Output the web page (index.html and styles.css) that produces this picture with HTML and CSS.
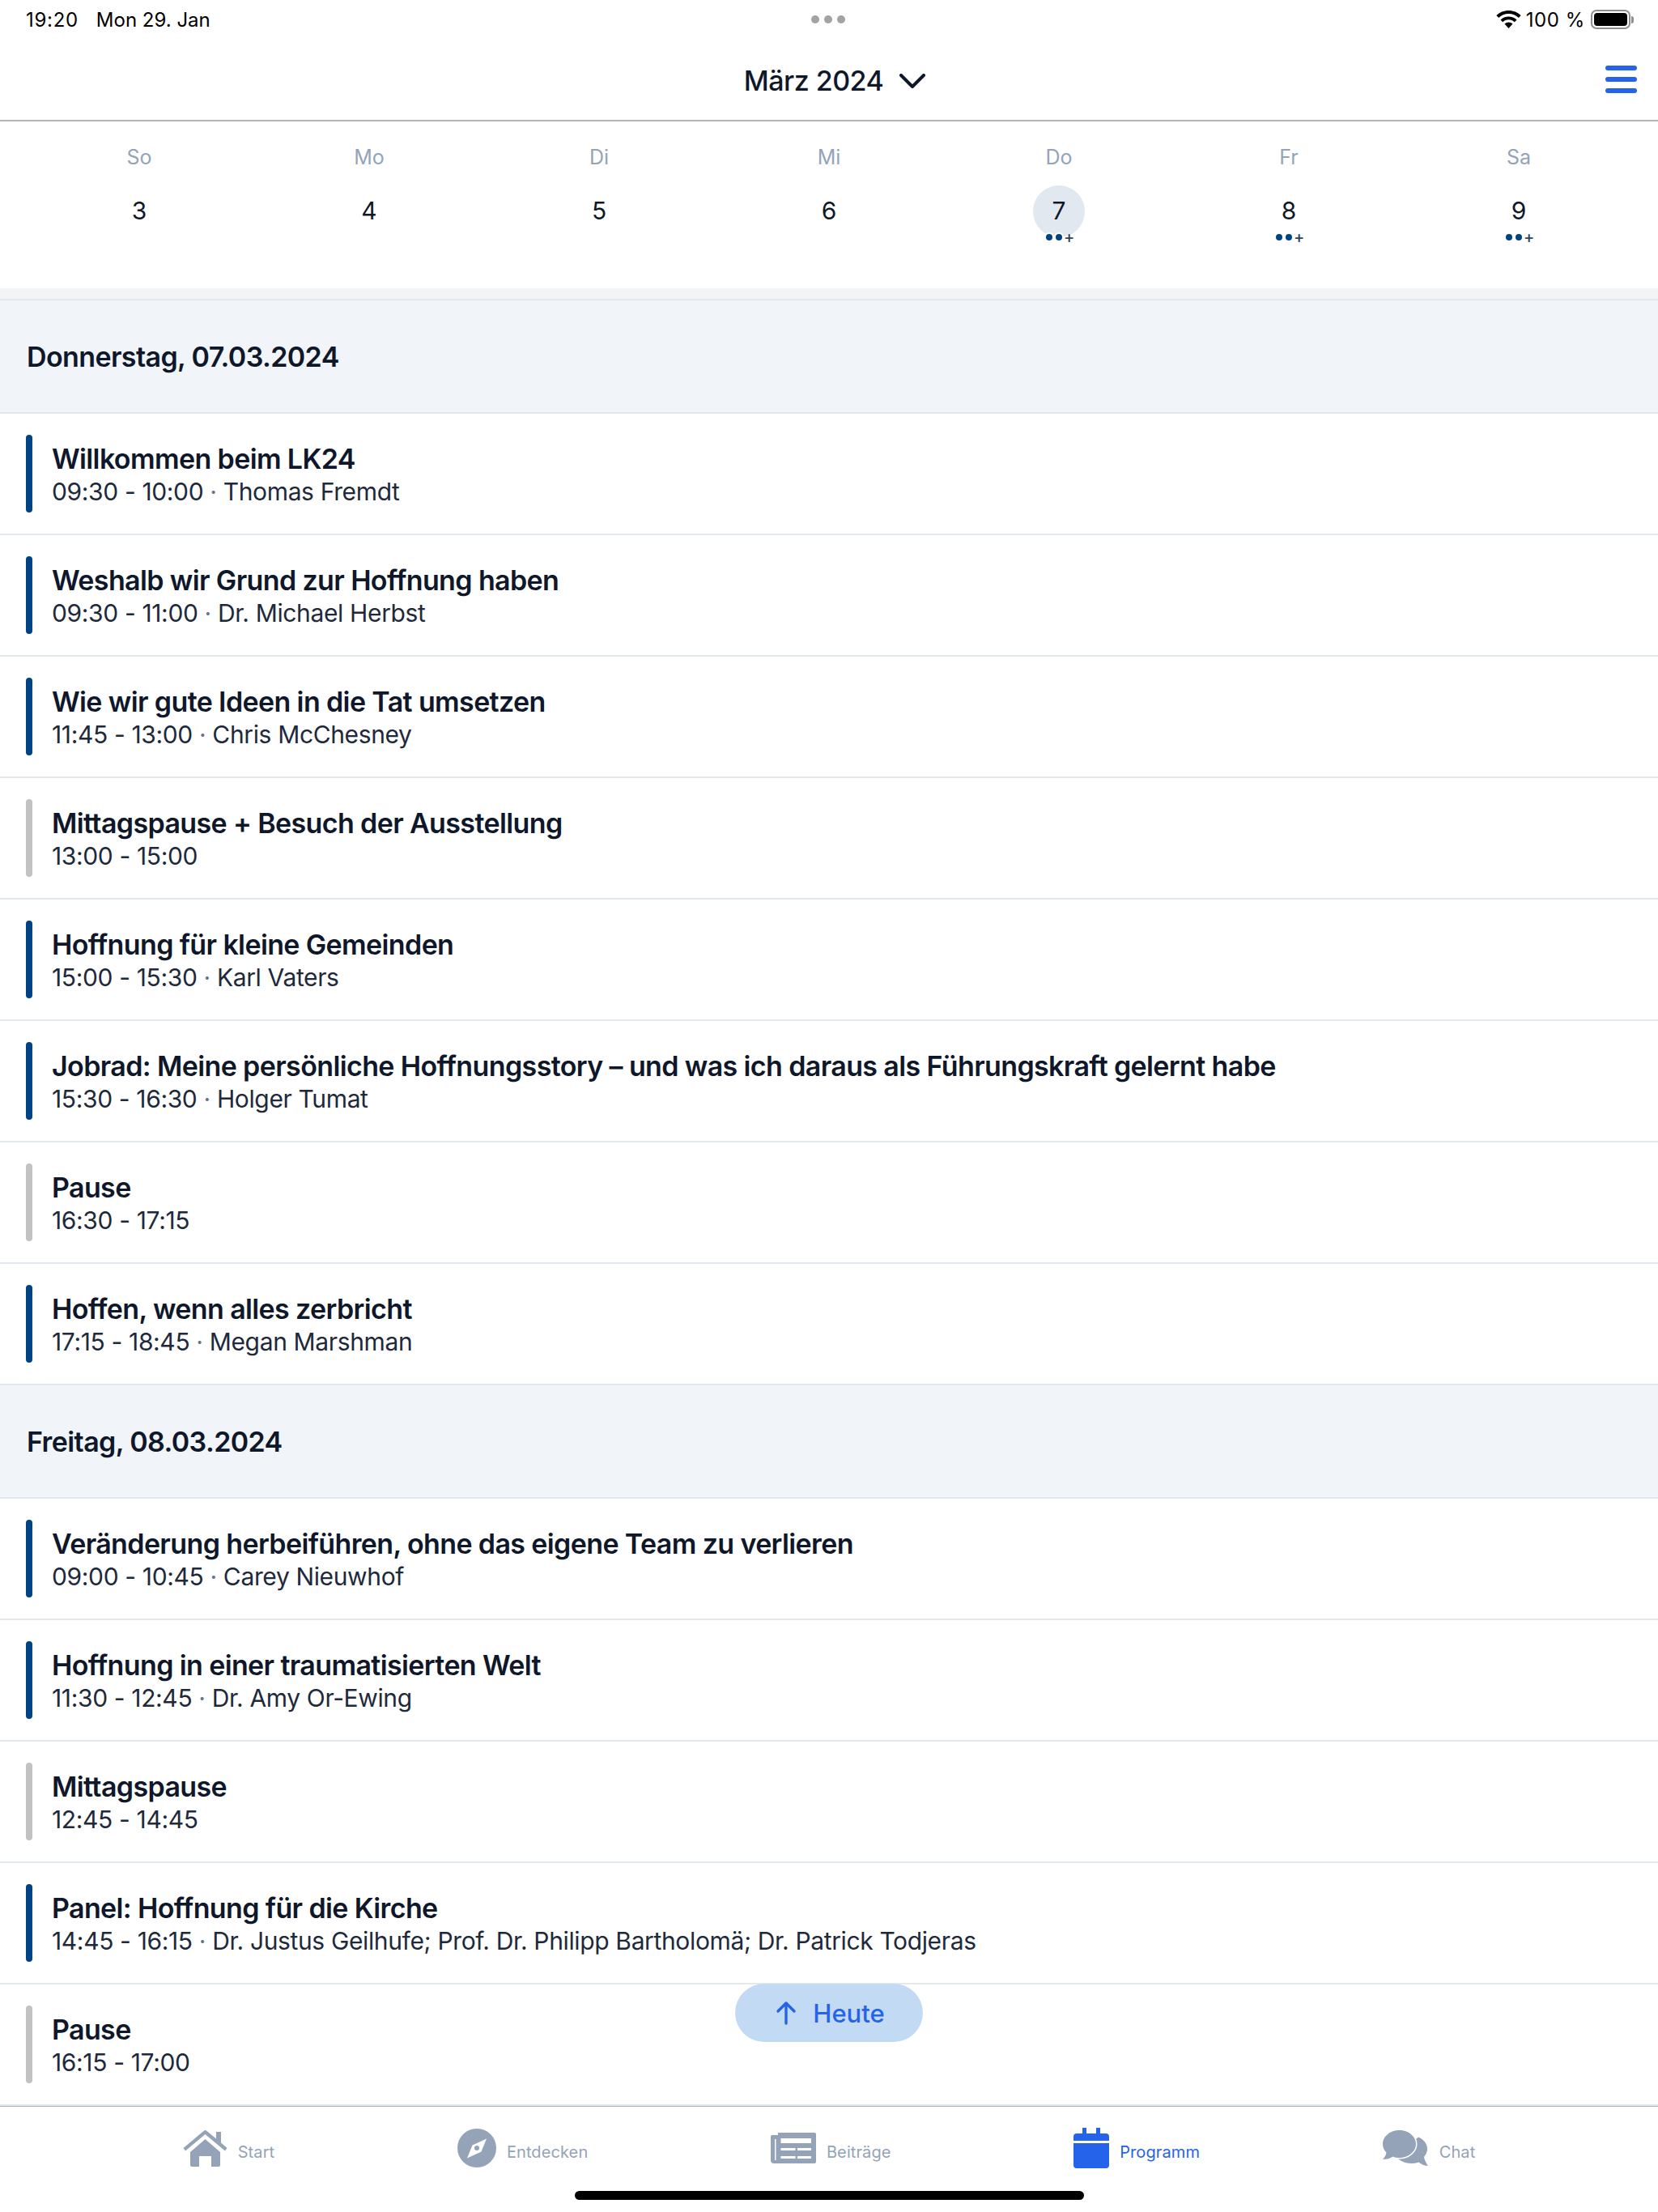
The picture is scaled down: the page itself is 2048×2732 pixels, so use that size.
FILE: index.html
```html
<!DOCTYPE html>
<html lang="de">
<head>
<meta charset="utf-8">
<title>Programm</title>
<link rel="stylesheet" href="styles.css">
</head>
<body>
<div class="app">
  <header class="top">
    <div class="status">
      <div class="status-left"><span class="time">19:20</span><span>Mon 29. Jan</span></div>
      <div class="status-right">
        <svg class="wifi" viewBox="0 0 31 22"><path d="M15.5 0C9.6 0 4.3 2.3.4 6.1l2.7 2.8c3.2-3.1 7.6-5 12.4-5s9.2 1.9 12.4 5l2.7-2.8C26.7 2.3 21.4 0 15.5 0z"/><path d="M15.5 7.4c-3.9 0-7.4 1.5-10 4l2.7 2.8c1.9-1.8 4.5-3 7.3-3s5.4 1.2 7.3 3l2.7-2.8c-2.6-2.5-6.1-4-10-4z"/><path d="M15.5 14.6c-1.9 0-3.7.8-5 2l5 5.4 5-5.4c-1.3-1.2-3.1-2-5-2z"/></svg>
        <span class="pct">100 %</span>
        <div class="battery"><div class="battery-fill"></div></div>
        <div class="battery-nub"></div>
      </div>
    </div>
    <div class="multi"><i></i><i></i><i></i></div>
    <div class="title-bar">
      <div class="month">
        <span>März 2024</span>
        <svg class="chevron" viewBox="0 0 32 18"><path d="M2 2l14 14L30 2" fill="none" stroke="#0f172a" stroke-width="4" stroke-linecap="round" stroke-linejoin="round"/></svg>
      </div>
      <div class="burger"><i></i><i></i><i></i></div>
    </div>
  </header>

  <section class="week">
    <div class="day"><span class="wd">So</span><span class="num">3</span></div>
    <div class="day"><span class="wd">Mo</span><span class="num">4</span></div>
    <div class="day"><span class="wd">Di</span><span class="num">5</span></div>
    <div class="day"><span class="wd">Mi</span><span class="num">6</span></div>
    <div class="day"><span class="wd">Do</span><span class="num today">7</span><div class="marks"><i></i><i></i><b>+</b></div></div>
    <div class="day"><span class="wd">Fr</span><span class="num">8</span><div class="marks"><i></i><i></i><b>+</b></div></div>
    <div class="day"><span class="wd">Sa</span><span class="num">9</span><div class="marks"><i></i><i></i><b>+</b></div></div>
  </section>

  <main class="list">
    <h2 class="date first">Donnerstag, 07.03.2024</h2>
    <article class="row"><div class="bar"></div><div><h3>Willkommen beim LK24</h3><p>09:30 - 10:00 <em>·</em> Thomas Fremdt</p></div></article>
    <article class="row"><div class="bar"></div><div><h3>Weshalb wir Grund zur Hoffnung haben</h3><p>09:30 - 11:00 <em>·</em> Dr. Michael Herbst</p></div></article>
    <article class="row"><div class="bar"></div><div><h3>Wie wir gute Ideen in die Tat umsetzen</h3><p>11:45 - 13:00 <em>·</em> Chris McChesney</p></div></article>
    <article class="row"><div class="bar grey"></div><div><h3>Mittagspause + Besuch der Ausstellung</h3><p>13:00 - 15:00</p></div></article>
    <article class="row"><div class="bar"></div><div><h3>Hoffnung für kleine Gemeinden</h3><p>15:00 - 15:30 <em>·</em> Karl Vaters</p></div></article>
    <article class="row"><div class="bar"></div><div><h3>Jobrad: Meine persönliche Hoffnungsstory – und was ich daraus als Führungskraft gelernt habe</h3><p>15:30 - 16:30 <em>·</em> Holger Tumat</p></div></article>
    <article class="row"><div class="bar grey"></div><div><h3>Pause</h3><p>16:30 - 17:15</p></div></article>
    <article class="row"><div class="bar"></div><div><h3>Hoffen, wenn alles zerbricht</h3><p>17:15 - 18:45 <em>·</em> Megan Marshman</p></div></article>
    <h2 class="date">Freitag, 08.03.2024</h2>
    <article class="row"><div class="bar"></div><div><h3>Veränderung herbeiführen, ohne das eigene Team zu verlieren</h3><p>09:00 - 10:45 <em>·</em> Carey Nieuwhof</p></div></article>
    <article class="row"><div class="bar"></div><div><h3>Hoffnung in einer traumatisierten Welt</h3><p>11:30 - 12:45 <em>·</em> Dr. Amy Or-Ewing</p></div></article>
    <article class="row"><div class="bar grey"></div><div><h3>Mittagspause</h3><p>12:45 - 14:45</p></div></article>
    <article class="row"><div class="bar"></div><div><h3>Panel: Hoffnung für die Kirche</h3><p>14:45 - 16:15 <em>·</em> Dr. Justus Geilhufe; Prof. Dr. Philipp Bartholomä; Dr. Patrick Todjeras</p></div></article>
    <article class="row"><div class="bar grey"></div><div><h3>Pause</h3><p>16:15 - 17:00</p></div></article>
    <button class="today-btn">
      <svg viewBox="0 0 26 30"><path d="M13 28V3M3 13L13 3l10 10" fill="none" stroke="#2563eb" stroke-width="3.4" stroke-linecap="round" stroke-linejoin="round"/></svg>
      <span>Heute</span>
    </button>
  </main>

  <nav class="tabs">
    <div class="tab">
      <svg class="ic-home" viewBox="0 0 55 45"><path d="M27.5 11L46 27v16a2 2 0 0 1-2 2H35V32H20v13h-9a2 2 0 0 1-2-2V27z"/><path d="M41 2h6v13.5l7.5 6.5-2.5 3.5L27.5 5 3 25.500.5 22 25.500 1a3 3 0 0 1 4 0L41 10.500z"/></svg>
      <span>Start</span>
    </div>
    <div class="tab">
      <svg class="ic-compass" viewBox="0 0 48 48"><circle cx="24" cy="24" r="24"/><path class="w" d="M36 12.500L29.500 28.500 12 36.500 18.500 20.500z"/><circle cx="24" cy="24" r="3"/></svg>
      <span>Entdecken</span>
    </div>
    <div class="tab">
      <svg class="ic-news" viewBox="0 0 56 38"><path d="M9 0h45a2 2 0 0 1 2 2v34a2 2 0 0 1-2 2H4a4 4 0 0 1-4-4V5a2 2 0 0 1 2-2h7z"/><path class="w" d="M12.500 7H50v6H12.500zM12.500 19h18v3h-18zM33 19h17v3H33zM12.500 29h18v3h-18zM33 29h17v3H33zM5 8h1.500v26H5z"/></svg>
      <span>Beiträge</span>
    </div>
    <div class="tab active">
      <svg class="ic-cal" viewBox="0 0 44 50"><path d="M11 0h5v7h12V0h5v7h7a4 4 0 0 1 4 4v5H0v-5a4 4 0 0 1 4-4h7zM0 19h44v27a4 4 0 0 1-4 4H4a4 4 0 0 1-4-4z"/></svg>
      <span>Programm</span>
    </div>
    <div class="tab">
      <svg class="ic-chat" viewBox="0 0 57 44"><path d="M44 8.500c7 3 11.500 9 11 15.500-.3 3.500-2 6.500-4 9 .5 3.500 3 8.500 5 11-4.500 0-8.500-2-11.500-4.500-3 1-6 1.500-9 1.500-9.500 0-17-4.500-20-10z"/><path class="ws" d="M20.500 0C31.500 0 41 7.500 41 17s-9.500 17-20.500 17c-3 0-5.500-.5-8-1.500C9.500 35 5 36 0 36c2-2 4-5 4.500-8.500C1.500 25 0 21 0 17 0 7.500 9.500 0 20.500 0z"/></svg>
      <span>Chat</span>
    </div>
  </nav>
  <div class="home-ind"></div>
</div>
</body>
</html>
```
FILE: styles.css
```css
* { box-sizing: border-box; margin: 0; padding: 0; }
html, body { width: 2048px; height: 2732px; background: #fff; overflow: hidden; }
body { font-family: Inter, "Liberation Sans", sans-serif; color: #0f172a; }
.app { position: relative; width: 2048px; height: 2732px; display: flex; flex-direction: column; overflow: hidden; }

.top { position: relative; height: 150px; border-bottom: 2px solid #b4b4b4; display: flex; flex-direction: column; }
.status { height: 48px; padding: 0 30px 0 32px; display: flex; justify-content: space-between; align-items: center; font-size: 24px; color: #000; }
.status-left { display: flex; gap: 22px; }
.time { letter-spacing: 0.7px; }
.status-right { display: flex; align-items: center; }
.pct { letter-spacing: 0.6px; }
.wifi { width: 31px; height: 22px; fill: #000; margin-right: 6px; }
.battery { width: 49px; height: 24px; border: 2px solid #8e8e8e; border-radius: 7px; padding: 2px; margin-left: 7px; }
.battery-fill { width: 100%; height: 100%; background: #000; border-radius: 4px; }
.battery-nub { width: 3px; height: 9px; background: #8e8e8e; border-radius: 0 3px 3px 0; margin-left: 1px; }
.multi { position: absolute; left: 1002px; top: 19px; display: flex; gap: 6px; }
.multi i { width: 10px; height: 10px; border-radius: 50%; background: #a3a3a3; }
.title-bar { flex: 1; padding: 0 26px; display: flex; justify-content: center; align-items: center; position: relative; }
.month { display: flex; align-items: center; gap: 20px; font-size: 34px; font-weight: 500; letter-spacing: -0.5px; margin-top: 2px; margin-left: 14px; }
.chevron { width: 32px; height: 18px; margin-top: 2px; }
.burger { position: absolute; right: 26px; top: 33px; display: flex; flex-direction: column; gap: 8px; }
.burger i { display: block; width: 39px; height: 6px; border-radius: 3px; background: #2563eb; }

.week { height: 206px; padding: 0 30px; display: grid; grid-template-columns: repeat(7, 1fr); }
.day { display: flex; flex-direction: column; align-items: center; padding-top: 27px; position: relative; }
.wd { font-size: 25px; line-height: 34px; color: #94a3b8; }
.num { width: 64px; height: 64px; margin-top: 18px; padding-bottom: 2px; border-radius: 50%; font-size: 30px; display: flex; align-items: center; justify-content: center; }
.today { background: #e2e8f0; }
.marks { position: absolute; top: 136px; display: flex; align-items: center; height: 14px; }
.marks i { width: 12px; height: 12px; border-radius: 50%; background: #004385; border: 2px solid #fff; }
.marks b { width: 12px; font-size: 20px; font-weight: 500; line-height: 14px; text-align: center; color: #334155; }

.list { position: relative; flex: 1; background: #f3f4f6; padding-top: 13px; }
.date { height: 140px; padding-left: 33px; display: flex; align-items: center; font-size: 34px; font-weight: 600; letter-spacing: -0.6px; background: #f1f5f9; border-bottom: 2px solid #e2e8f0; }
.date.first { height: 142px; border-top: 2px solid #e2e8f0; }
.row { height: 150px; padding: 0 32px; display: flex; align-items: center; gap: 24px; background: #fff; border-bottom: 2px solid #e2e8f0; }
.bar { width: 8px; height: 96px; border-radius: 4px; background: #004385; flex: none; }
.bar.grey { background: #c2c2c2; }
.row h3 { font-size: 34px; line-height: 47px; margin-bottom: -3px; font-weight: 600; letter-spacing: -0.62px; }
.row p { font-size: 30px; line-height: 40px; letter-spacing: -0.36px; color: #1e293b; }
.row em { font-style: normal; color: #64748b; }

.today-btn { position: absolute; left: 908px; top: 2094px; width: 232px; height: 72px; padding-left: 3px; border: 0; border-radius: 36px; background: #c3daf5; color: #2563eb; font: 500 31px Inter, sans-serif; display: flex; align-items: center; justify-content: center; gap: 20px; }
.today-btn svg { width: 26px; height: 30px; }

.tabs { height: 131px; border-top: 1px solid #b0b4bc; display: flex; justify-content: space-evenly; padding-top: 26px; align-items: flex-start; }
.tab { display: flex; align-items: center; gap: 13px; font-size: 20px; letter-spacing: 0.1px; color: #94a3b8; height: 50px; }
.tab span { margin-top: 10px; }
.tab svg { fill: #94a3b8; flex: none; }
.tab .w { fill: #fff; }
.tab .ws { stroke: #fff; stroke-width: 3; paint-order: stroke; }
.tab.active { color: #2563eb; }
.tab.active svg { fill: #2563eb; }
.ic-home { width: 55px; height: 45px; }
.ic-compass { width: 48px; height: 48px; }
.ic-news { width: 56px; height: 38px; }
.ic-cal { width: 44px; height: 50px; }
.ic-chat { width: 57px; height: 44px; }

.home-ind { position: absolute; left: 710px; top: 2706px; width: 629px; height: 11px; border-radius: 6px; background: #000; }
```
